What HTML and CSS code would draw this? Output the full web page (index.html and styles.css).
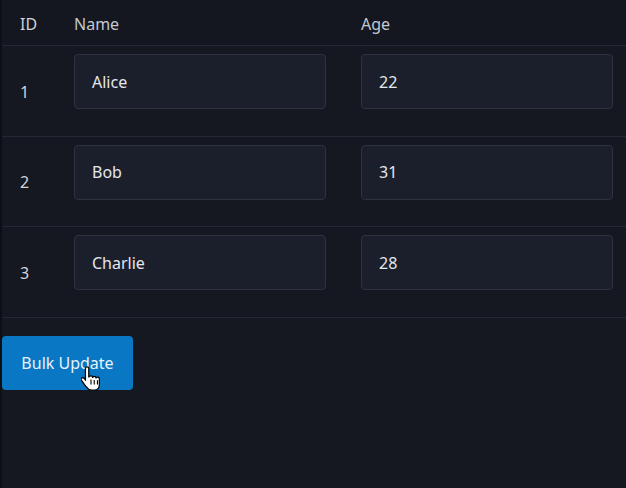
FILE: index.html
```html
<!DOCTYPE html>
<html>
<head>
<meta charset="utf-8">
<link rel="stylesheet" href="styles.css">
</head>
<body>
<div class="page">
  <div class="table">
    <div class="row head">
      <div class="cell id">ID</div>
      <div class="cell name">Name</div>
      <div class="cell age">Age</div>
    </div>
    <div class="row">
      <div class="cell id">1</div>
      <div class="cell name top"><input class="field" value="Alice"></div>
      <div class="cell age top"><input class="field" value="22"></div>
    </div>
    <div class="row">
      <div class="cell id">2</div>
      <div class="cell name top"><input class="field" value="Bob"></div>
      <div class="cell age top"><input class="field" value="31"></div>
    </div>
    <div class="row">
      <div class="cell id">3</div>
      <div class="cell name top"><input class="field" value="Charlie"></div>
      <div class="cell age top"><input class="field" value="28"></div>
    </div>
  </div>
  <div class="actions">
    <button class="btn">Bulk Update</button>
    <svg class="cursor" width="20" height="27" viewBox="0 0 18 24">
      <path d="M5.5 1.5c-.9 0-1.5.7-1.5 1.5v10.2l-1.3-1.4c-.7-.7-1.8-.7-2.3 0-.5.5-.4 1.300.1 1.9l3.8 5.3c1 1.4 2.4 3.5 5.2 3.5h2.5c2.8 0 4.5-2.100 4.5-5v-5.3c0-.9-.7-1.5-1.5-1.5s-1.5.6-1.5 1.3v-.5c0-.8-.7-1.4-1.5-1.4s-1.5.6-1.5 1.4v-.4c0-.8-.7-1.4-1.5-1.4S7 10.4 7 11.2V3c0-.8-.6-1.5-1.5-1.5z" fill="#fff" stroke="#000" stroke-width="1.1"/>
      <path d="M9 13v4.5M11.9 13.3v4.2M14.8 13.6v3.9" stroke="#000" stroke-width="1"/>
    </svg>
  </div>
</div>
</body>
</html>
```

FILE: styles.css
```css
html, body {
  margin: 0;
  padding: 0;
  background: #0b0f17;
  height: 100%;
}
body {
  font-family: "Noto Sans", "Open Sans", sans-serif;
  font-size: 16px;
}
.page {
  margin-left: 2px;
  height: 100%;
  background: #151820;
  color: #c9ced6;
}
.table {
  display: flex;
  flex-direction: column;
}
.row {
  display: grid;
  grid-template-columns: 54px 287px 1fr;
  height: 89.5px;
  border-bottom: 1px solid #232833;
}
.row.head {
  height: 45px;
  background: #141720;
}
.cell {
  display: flex;
  align-items: center;
  padding-left: 18px;
}
.head .cell {
  padding-top: 2px;
  color: #c3c8d1;
}
.cell.id {
  color: #d0d4db;
  padding-top: 2px;
}
.cell.name { padding-right: 17px; }
.cell.age { padding-right: 13px; }
.cell.top {
  align-items: flex-start;
  padding-top: 8px;
}
.field {
  box-sizing: border-box;
  width: 100%;
  height: 55px;
  margin: 0;
  padding: 0 17px;
  background: #1b1f2b;
  border: 1px solid #2d3341;
  border-radius: 4px;
  color: #e4e7ec;
  font-family: "Noto Sans", "Open Sans", sans-serif;
  font-size: 16px;
  outline: none;
}
.actions {
  position: relative;
  padding-top: 18px;
}
.btn {
  width: 131px;
  height: 54px;
  background: #0a77c4;
  border: none;
  border-radius: 4px;
  color: #e6f2fb;
  font-family: "Noto Sans", "Open Sans", sans-serif;
  font-size: 16px;
  padding: 0;
}
.cursor {
  position: absolute;
  left: 79px;
  top: 47px;
}
```
